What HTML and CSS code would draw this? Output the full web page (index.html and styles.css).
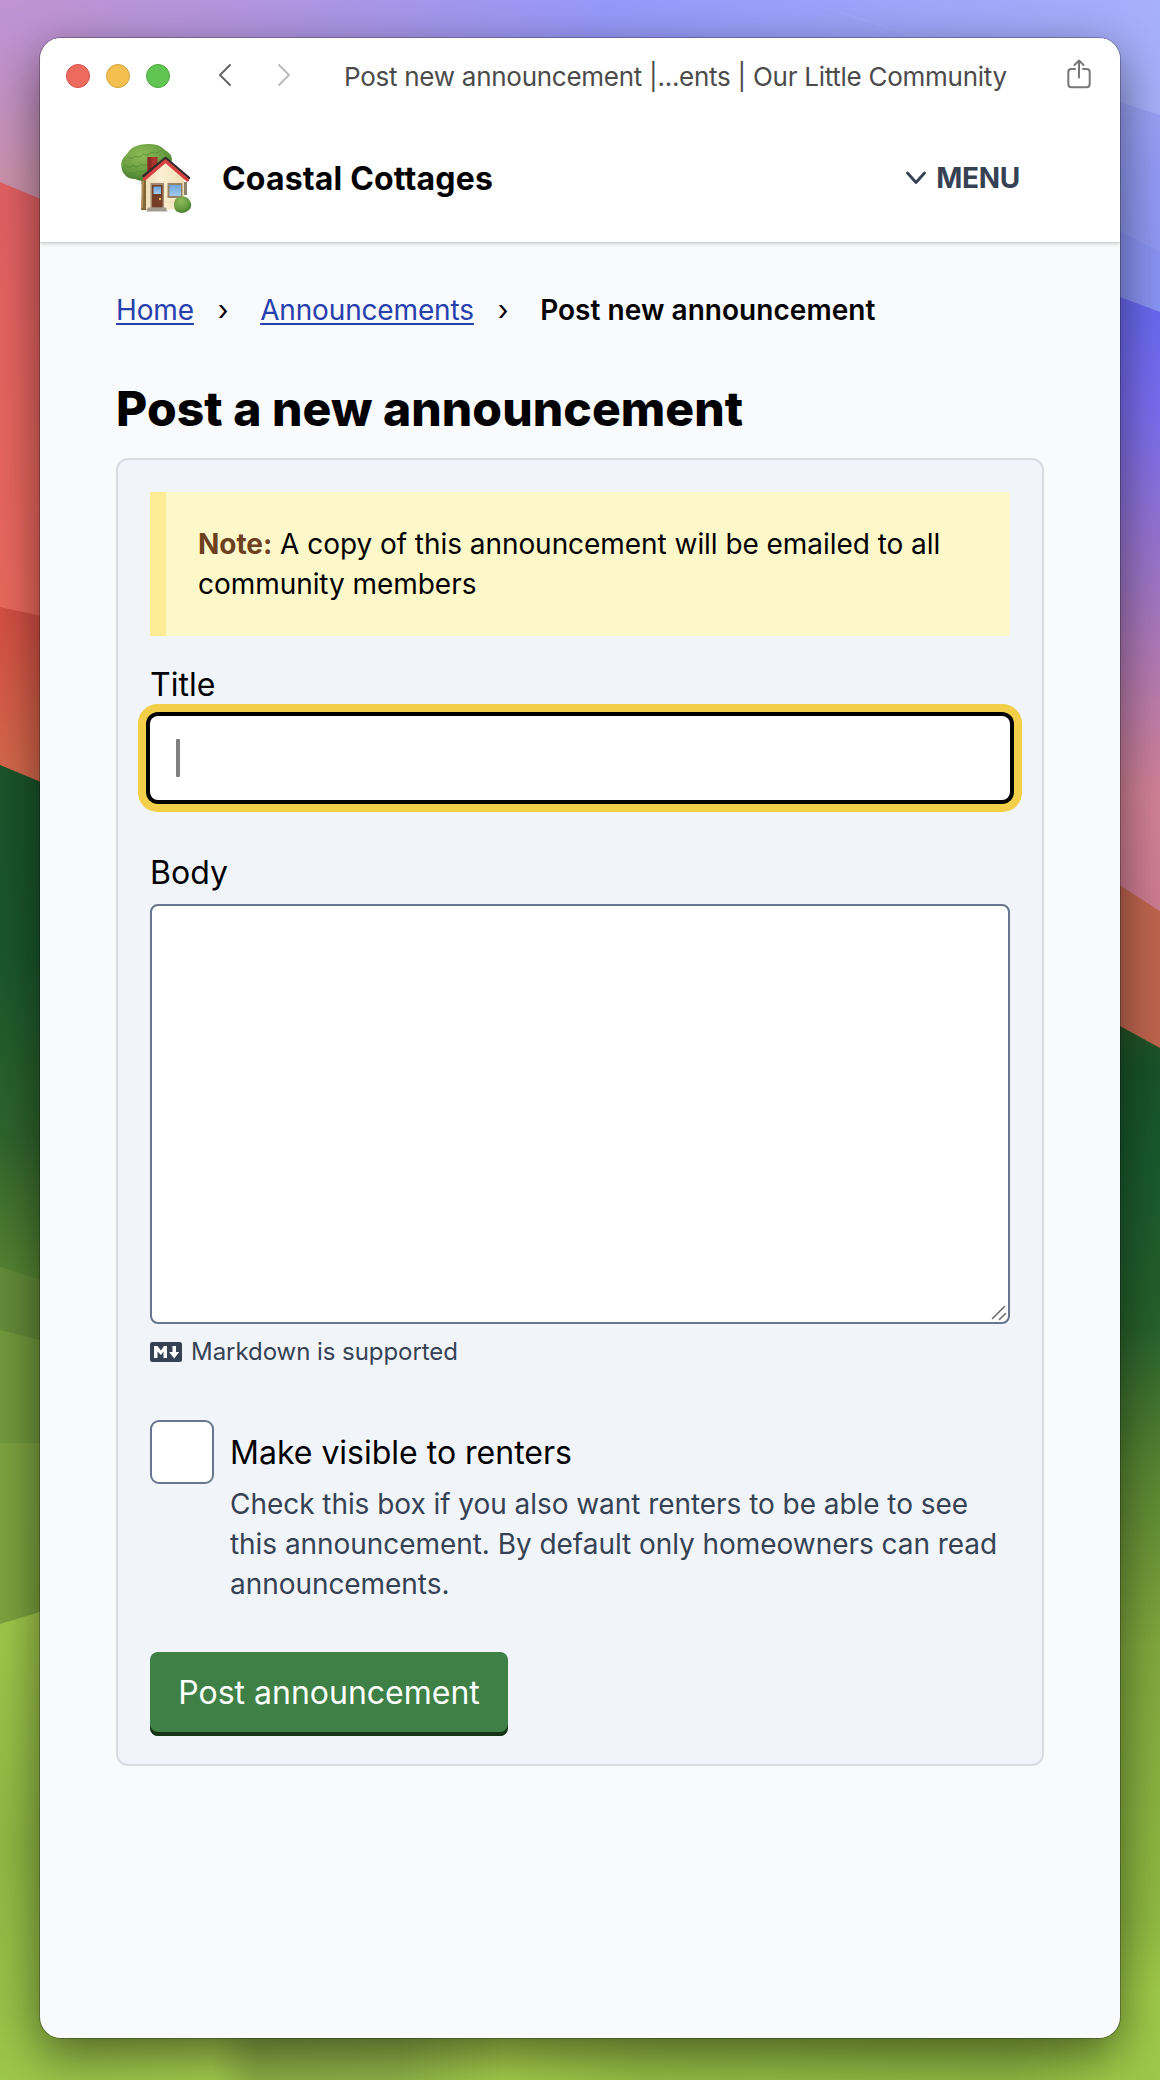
FILE: index.html
```html
<!DOCTYPE html>
<html lang="en">
<head>
<meta charset="utf-8">
<title>Post new announcement | Announcements | Our Little Community</title>
<link rel="stylesheet" href="styles.css">
</head>
<body class="desktop">
<svg class="wallpaper" viewBox="0 0 1160 2080" preserveAspectRatio="none" aria-hidden="true">
  <defs>
    <linearGradient id="sky"><stop offset="0" stop-color="#c294d2"/><stop offset=".25" stop-color="#b096e2"/><stop offset=".52" stop-color="#9799fa"/><stop offset="1" stop-color="#a7b0fb"/></linearGradient>
    <linearGradient id="mauve" x2="0" y2="1"><stop offset="0" stop-color="#bd92d8" stop-opacity=".6"/><stop offset=".6" stop-color="#cd93ac"/><stop offset="1" stop-color="#cd93ac"/></linearGradient>
    <linearGradient id="blue" x2="0" y2="1"><stop offset="0" stop-color="#a4adfb"/><stop offset=".5" stop-color="#939bf5"/><stop offset="1" stop-color="#8c96f2"/></linearGradient>
    <linearGradient id="red" x2="0" y2="1"><stop offset="0" stop-color="#e36164"/><stop offset="1" stop-color="#ef6b5c"/></linearGradient>
    <linearGradient id="rust" x2="0" y2="1"><stop offset="0" stop-color="#d54e43"/><stop offset="1" stop-color="#d77450"/></linearGradient>
    <linearGradient id="forest" x2="0" y2="1"><stop offset="0" stop-color="#1b542a"/><stop offset=".35" stop-color="#19572c"/><stop offset=".7" stop-color="#30652c"/><stop offset="1" stop-color="#5d8b34"/></linearGradient>
    <linearGradient id="dusk" x2="0" y2="1"><stop offset="0" stop-color="#6568f2"/><stop offset=".2" stop-color="#7a6df0"/><stop offset=".5" stop-color="#a477c2"/><stop offset=".8" stop-color="#d38297"/><stop offset="1" stop-color="#cf7c91"/></linearGradient>
    <linearGradient id="hill" x2="0" y2="1"><stop offset="0" stop-color="#2b5224"/><stop offset=".06" stop-color="#185329"/><stop offset=".15" stop-color="#195a2d"/><stop offset=".3" stop-color="#27612c"/><stop offset=".43" stop-color="#588532"/><stop offset=".6" stop-color="#82aa3e"/><stop offset=".85" stop-color="#90bb43"/><stop offset=".92" stop-color="#a0cc49"/><stop offset="1" stop-color="#9cc849"/></linearGradient>
    <linearGradient id="lawn" x2="0" y2="1"><stop offset="0" stop-color="#a2ca4c"/><stop offset=".5" stop-color="#92b945"/><stop offset="1" stop-color="#9dc74a"/></linearGradient>
    <linearGradient id="field1" x2="0" y2="1"><stop offset="0" stop-color="#7da441"/><stop offset="1" stop-color="#7da33e"/></linearGradient>
    <linearGradient id="foot"><stop offset="0" stop-color="#9cc54a"/><stop offset=".16" stop-color="#a6ce4e"/><stop offset=".2" stop-color="#8db046"/><stop offset=".33" stop-color="#91b549"/><stop offset=".43" stop-color="#a8d04c"/><stop offset=".56" stop-color="#98c046"/><stop offset=".9" stop-color="#90ba43"/><stop offset="1" stop-color="#a0cb49"/></linearGradient>
  </defs>
  <rect width="1160" height="400" fill="url(#sky)"/>
  <path d="M0 6L300 105V300H0z" fill="url(#mauve)"/>
  <path d="M800 0L1160 115V350H1080V85z" fill="url(#blue)"/>
  <path d="M1080 210L1160 252V350H1080z" fill="#8994f4"/>
  <path d="M0 182L60 207V700H0z" fill="url(#red)"/>
  <path d="M0 607L60 620V840H0z" fill="url(#rust)"/>
  <path d="M0 765L60 790V1300H0z" fill="url(#forest)"/>
  <path d="M0 1267L60 1286V1400H0z" fill="#638c39"/>
  <path d="M0 1330L60 1345V1450H0z" fill="#719a3c"/>
  <path d="M0 1443H60V1640H0z" fill="url(#field1)"/>
  <path d="M0 1624L60 1606V2080H0z" fill="url(#lawn)"/>
  <path d="M1080 282L1160 312V920H1080z" fill="url(#dusk)"/>
  <path d="M1080 860L1160 911V1060H1080z" fill="#c0664e"/>
  <path d="M1080 1004L1160 1048V2080H1080z" fill="url(#hill)"/>
  <rect x="40" y="2020" width="1080" height="60" fill="url(#foot)"/>
</svg>

<div class="window">
  <header class="masthead">
    <div class="titlebar">
      <div class="lights"><span class="light close"></span><span class="light minimize"></span><span class="light zoom"></span></div>
      <svg class="nav-arrow" viewBox="0 0 14 24"><path d="M12 2L2 12l10 10"/></svg>
      <svg class="nav-arrow forward" viewBox="0 0 14 24"><path d="M2 2l10 10L2 22"/></svg>
      <div class="page-title">Post new announcement |...ents | Our Little Community</div>
      <svg class="share" viewBox="0 0 24 30"><path d="M8 10H4.500Q1.300 10 1.300 13v12q0 3.200 3.200 3.200h15q3.200 0 3.200-3.200V13q0-3-3.200-3H16M12 18.500V1.800M7.500 6L12 1.500 16.500 6"/></svg>
    </div>
    <div class="brandbar">
      <svg class="logo" viewBox="0 0 72 70">
        <defs>
          <radialGradient id="leaf" cx=".4" cy=".3" r=".75"><stop offset="0" stop-color="#8fbb58"/><stop offset=".65" stop-color="#659a3e"/><stop offset="1" stop-color="#3f742c"/></radialGradient>
          <linearGradient id="wall"><stop offset="0" stop-color="#f0dfb9"/><stop offset=".4" stop-color="#fbf0d2"/><stop offset="1" stop-color="#f1dfb5"/></linearGradient>
          <linearGradient id="glass" x2="0" y2="1"><stop offset="0" stop-color="#6fa5dc"/><stop offset="1" stop-color="#a0cbee"/></linearGradient>
        </defs>
        <path d="M21 34h7v33h-7q2-14 0-33z" fill="#826637"/>
        <path d="M22 36l2 1-1 28h-2z" fill="#ad8b52"/>
        <path d="M1.500 25Q0 17 6 12 12 1 27 1q12-1 18 6 7 4 7 10l-8 16-18 4q-6 2-11-1-7 0-10-4-3-3-3.500-7z" fill="url(#leaf)"/>
        <path d="M8 14q4 3 7-1 5 3 8-2 6 3 8-2 5 3 8-1M5 23q5 3 8-1 4 4 8-1 3 3 6 0M9 30q5 2 8-2 4 3 8-1" fill="none" stroke="#4e8233" stroke-width="1" opacity=".65"/>
        <path d="M27.500 14h10v13l-10 9z" fill="#a9352e"/><path d="M27.500 14h4v17l-4 3z" fill="#8a2a24"/>
        <path d="M64 39h3v13h-3z" fill="#8e816c"/>
        <path d="M26 35L46 18l18 16v32.500H26z" fill="url(#wall)"/>
        <path d="M28 39h35M28 44h35M28 49h35M28 54h35M28 59h35" stroke="#e4d4ae" stroke-width=".5"/>
        <path d="M23.500 33L45.500 15 69 35" fill="none" stroke="#302b2d" stroke-width="2.500"/>
        <path d="M24.500 36L45.500 18 67.500 37" fill="none" stroke="#d54040" stroke-width="3.400"/>
        <path d="M30.500 40h13.500v25H30.500z" fill="#a38b70"/><path d="M32 42h10.500v22.500H32z" fill="#743d27"/>
        <path d="M33.500 43.500h7.500v7.500h-7.500z" fill="url(#glass)"/><circle cx="40" cy="56" r="1.200" fill="#edbc4b"/>
        <path d="M47.500 40h15v15h-15z" fill="#988369"/><path d="M49.500 42h11.500v11H49.500z" fill="url(#glass)"/>
        <path d="M28 64.500h18l1.500 4H26.500z" fill="#a39c92"/>
        <path d="M54 61q0-6 6-7 7-2 10 4 3 5-1 9-4 4-10 2.500-5-1-5-8.500z" fill="url(#leaf)"/>
      </svg>
      <div class="brand">Coastal Cottages</div>
      <button class="menu"><svg class="chevron" viewBox="0 0 20 14"><path d="M1.500 2L10 11.500 18.500 2"/></svg><span>MENU</span></button>
    </div>
  </header>

  <main class="content">
    <nav class="crumbs"><a href="#">Home</a><span class="sep">›</span><a href="#">Announcements</a><span class="sep">›</span><strong>Post new announcement</strong></nav>
    <h1>Post a new announcement</h1>
    <form class="card">
      <p class="note"><strong>Note:</strong> A copy of this announcement will be emailed to all community members</p>
      <div class="label title-label">Title</div>
      <div class="title-field"><span class="caret"></span></div>
      <div class="label body-label">Body</div>
      <div class="body-field"><svg class="grip" viewBox="0 0 16 16"><path d="M1.500 13.500l12-12M8.500 14.500l6-6"/></svg></div>
      <div class="hint">
        <svg class="markdown" viewBox="0 0 32 20"><rect width="32" height="20" rx="2.500" fill="#364254"/><path d="M4 16V4h3.500L11 8.500 14 4h3v12h-3.500V9.500L11 13 7.500 9.500V16zM22.500 4H26v6h3.200L24.200 16.500 19.200 10h3.300z" fill="#fff"/></svg>
        <span>Markdown is supported</span>
      </div>
      <div class="option">
        <span class="checkbox"></span>
        <div>
          <div class="label">Make visible to renters</div>
          <p class="help">Check this box if you also want renters to be able to see this announcement. By default only homeowners can read announcements.</p>
        </div>
      </div>
      <button class="submit" type="button">Post announcement</button>
    </form>
  </main>
</div>
</body>
</html>
```
FILE: styles.css
```css
* { box-sizing: border-box; }
.desktop { margin: 0; width: 1160px; height: 2080px; display: grid; overflow: hidden; font-family: Inter, sans-serif; color: #000; }
.wallpaper, .window { grid-area: 1 / 1; }
.wallpaper { width: 1160px; height: 2080px; }
.window { margin: 38px 40px 42px; background: #f9fafc; border-radius: 21px; position: relative; overflow: hidden; box-shadow: 0 0 0 1px rgba(0,0,0,.25), 0 16px 50px rgba(0,0,0,.52); }
svg path { stroke-linecap: round; stroke-linejoin: round; }
.masthead { height: 204px; background: #fff; box-shadow: 0 1px 4px rgba(0,0,0,.25); }

.titlebar { height: 76px; padding: 0 29px 0 26px; display: flex; align-items: center; }
.lights { display: flex; gap: 16px; }
.light { width: 24px; height: 24px; border-radius: 50%; border: 1px solid; }
.close { background: #ec6a5e; border-color: #cf5348; }
.minimize { background: #f4bf4f; border-color: #d2a03d; }
.zoom { background: #61c554; border-color: #4ea73f; }
.nav-arrow { width: 14px; height: 24px; margin-left: 48px; margin-top: -2px; fill: none; stroke: #666; stroke-width: 2; }
.forward { margin-left: 45px; stroke: #bbb; }
.page-title { margin: 2px 0 0 53px; width: 690px; font-size: 26px; line-height: 36px; color: #4b4b4b; white-space: nowrap; letter-spacing: -.27px; }
.share { width: 24px; height: 30px; margin: -4px 0 0 auto; fill: none; stroke: #777; stroke-width: 2; }

.brandbar { display: flex; align-items: center; padding: 0 100px 0 80px; height: 128px; }
.logo { width: 72px; height: 70px; }
.brand { margin: 2px 0 0 30px; font-size: 32px; line-height: 40px; font-weight: 700; white-space: nowrap; letter-spacing: .17px; }
.menu { margin-left: auto; display: flex; align-items: center; gap: 10px; padding: 0; border: 0; background: none; font: 700 28px/40px Inter, sans-serif; letter-spacing: -.3px; color: #364254; }
.chevron { width: 20px; height: 14px; fill: none; stroke: #364254; stroke-width: 2.800; }

.content { padding: 48px 76px 0; }
.crumbs { display: flex; font-size: 28px; line-height: 40px; white-space: nowrap; }
.crumbs a { color: #2640ad; letter-spacing: -.15px; text-decoration-thickness: 2px; text-underline-offset: 3px; }
.crumbs strong { font-weight: 600; letter-spacing: .04px; }
.sep { margin: 0 31.5px 0 24px; }
h1 { margin: 50px 0 20px; font-size: 48px; line-height: 58px; font-weight: 800; white-space: nowrap; letter-spacing: .06px; }
.card { border: 2px solid #d8dce1; border-radius: 12px; background: #f1f5fa; width: 928px; height: 1308px; padding: 32px; }
.note { margin: 0; height: 144px; padding: 32px; border-left: 16px solid #fdee95; background: #fdf8c9; font-size: 28px; line-height: 40px; letter-spacing: -.05px; }
.note strong { color: #6d4120; font-weight: 700; }
.label { font-size: 32px; line-height: 48px; }
.title-label { margin-top: 25px; }
.title-field { margin-top: 7px; height: 84px; border-radius: 8px; background: #fff; box-shadow: 0 0 0 4px #000, 0 0 0 12px #f3ce49; display: flex; align-items: center; padding-left: 26px; }
.caret { width: 4px; height: 38px; border-radius: 1px; background: #808080; }
.body-label { margin-top: 49px; }
.body-field { margin-top: 7px; height: 420px; border: 2px solid #68758e; border-radius: 8px; background: #fff; display: flex; align-items: flex-end; justify-content: flex-end; padding: 1px; }
.grip { width: 16px; height: 16px; fill: none; stroke: #666; stroke-width: 1.500; }
.hint { display: flex; align-items: center; gap: 9px; margin-top: 8px; font-size: 24px; line-height: 40px; letter-spacing: -.05px; color: #364254; }
.markdown { width: 32px; height: 20px; }
.option { display: flex; gap: 16px; margin-top: 48px; }
.checkbox { flex: none; width: 64px; height: 64px; border: 2px solid #68758e; border-radius: 9px; background: #fff; }
.option .label { padding-top: 9px; }
.help { margin: 7px 0 0; font-size: 28px; line-height: 40px; letter-spacing: -.05px; color: #364254; }
.submit { display: block; margin-top: 48px; width: 358px; height: 84px; padding: 0 0 2px; border: 0; border-radius: 8px; background: #3e8045; box-shadow: inset 0 -4px #163318; color: #fff; font: 400 32px/40px Inter, sans-serif; }
```
